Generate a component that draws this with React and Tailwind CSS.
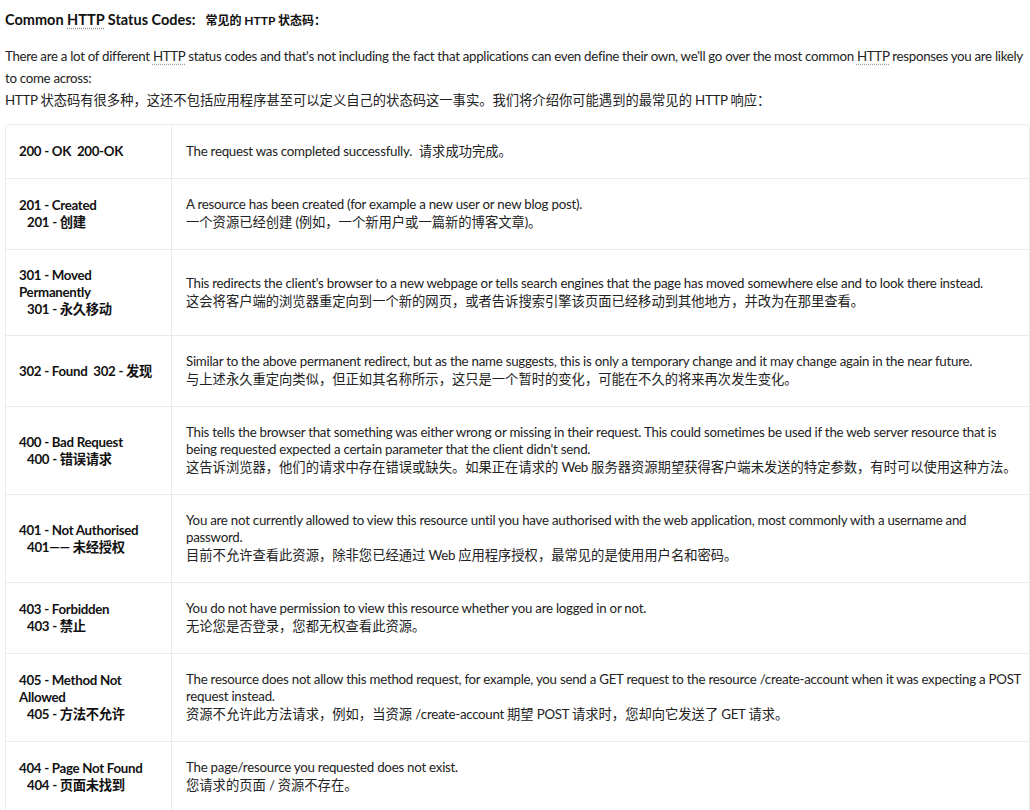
const font = { fontFamily: '"Lato", "Noto Sans CJK SC", sans-serif' };

const rows = [
  { code: ['200 - OK  200-OK'], en: 'The request was completed successfully.', zh: '请求成功完成。', inline: true },
  { code: ['201 - Created', '201 - 创建'], en: 'A resource has been created (for example a new user or new blog post).', zh: '一个资源已经创建 (例如，一个新用户或一篇新的博客文章)。' },
  {
    code: ['301 - Moved Permanently', '301 - 永久移动'],
    en: "This redirects the client's browser to a new webpage or tells search engines that the page has moved somewhere else and to look there instead.",
    zh: '这会将客户端的浏览器重定向到一个新的网页，或者告诉搜索引擎该页面已经移动到其他地方，并改为在那里查看。',
  },
  {
    code: ['302 - Found  302 - 发现'],
    en: 'Similar to the above permanent redirect, but as the name suggests, this is only a temporary change and it may change again in the near future.',
    zh: '与上述永久重定向类似，但正如其名称所示，这只是一个暂时的变化，可能在不久的将来再次发生变化。',
  },
  {
    code: ['400 - Bad Request', '400 - 错误请求'],
    en: "This tells the browser that something was either wrong or missing in their request. This could sometimes be used if the web server resource that is being requested expected a certain parameter that the client didn't send.",
    zh: '这告诉浏览器，他们的请求中存在错误或缺失。如果正在请求的 Web 服务器资源期望获得客户端未发送的特定参数，有时可以使用这种方法。',
  },
  {
    code: ['401 - Not Authorised', '401—— 未经授权'],
    en: 'You are not currently allowed to view this resource until you have authorised with the web application, most commonly with a username and password.',
    zh: '目前不允许查看此资源，除非您已经通过 Web 应用程序授权，最常见的是使用用户名和密码。',
  },
  {
    code: ['403 - Forbidden', '403 - 禁止'],
    en: 'You do not have permission to view this resource whether you are logged in or not.',
    zh: '无论您是否登录，您都无权查看此资源。',
  },
  {
    code: ['405 - Method Not Allowed', '405 - 方法不允许'],
    en: 'The resource does not allow this method request, for example, you send a GET request to the resource /create-account when it was expecting a POST request instead.',
    zh: '资源不允许此方法请求，例如，当资源 /create-account 期望 POST 请求时，您却向它发送了 GET 请求。',
  },
  {
    code: ['404 - Page Not Found', '404 - 页面未找到'],
    en: 'The page/resource you requested does not exist.',
    zh: '您请求的页面 / 资源不存在。',
  },
];

const hasCjk = (s) => /[\u3000-\u9fff\uff00-\uffef]/.test(s);

// latin runs inside chinese lines get the same tightening as the english text
const Mixed = ({ text }) =>
  text.split(/([\x00-\x7F]+)/).map((part, i) =>
    /^[\x00-\x7F]+$/.test(part) ? (
      <span key={i} className="tracking-[-0.3px]">
        {part}
      </span>
    ) : (
      part
    )
  );

const Abbr = ({ children }) => (
  <span className="underline decoration-dotted decoration-[#999] underline-offset-[3px]">{children}</span>
);

export default function App() {
  return (
    <div className="bg-white text-[#222] text-[13.3px] min-h-[810px] pl-[5px]" style={font}>
      <p className="pt-[11px] font-bold text-[#111] leading-[18px] whitespace-nowrap">
        <span className="text-[14.5px]">
          Common <Abbr>HTTP</Abbr> Status Codes:
        </span>
        <span className="text-[12px] ml-[10px]">常见的 HTTP 状态码：</span>
      </p>
      <p className="mt-[15px] leading-[22px]">
        <span className="tracking-[-0.3px]">
          There are a lot of different <Abbr>HTTP</Abbr> status codes and that's not including the fact that applications can even define their own, we'll go over the most common <Abbr>HTTP</Abbr> responses you are likely to come across:
        </span>
        <br />
        <Mixed text="HTTP 状态码有很多种，这还不包括应用程序甚至可以定义自己的状态码这一事实。我们将介绍你可能遇到的最常见的 HTTP 响应：" />
      </p>
      <div className="mt-[13px] border border-[#ebebeb] rounded-[4px]">
        {rows.map((row, i) => (
          <div key={i} className={'flex ' + (i > 0 ? 'border-t border-[#ebebeb]' : '')}>
            <div className="w-[166px] shrink-0 border-r border-[#ebebeb] px-[13px] py-[17px] flex flex-col justify-center font-bold text-[#111] leading-[17px] tracking-[-0.3px]">
              {row.code.map((c, j) => (
                <div
                  key={j}
                  className={(j > 0 ? 'pl-[8px] ' : 'whitespace-pre-wrap ') + (hasCjk(c) ? 'h-[17px]' : '')}
                >
                  {c}
                </div>
              ))}
            </div>
            <div className="flex-1 pl-[14px] pr-[6px] py-[17px] flex flex-col justify-center">
              {row.inline ? (
                <div className="h-[19px] leading-[19px] whitespace-pre">
                  <span className="tracking-[-0.25px]">{row.en}</span>  {row.zh}
                </div>
              ) : (
                <>
                  <div className="leading-[17px] tracking-[-0.25px]">{row.en}</div>
                  <div className="h-[19px] leading-[19px] whitespace-nowrap">
                    <Mixed text={row.zh} />
                  </div>
                </>
              )}
            </div>
          </div>
        ))}
      </div>
    </div>
  );
}
